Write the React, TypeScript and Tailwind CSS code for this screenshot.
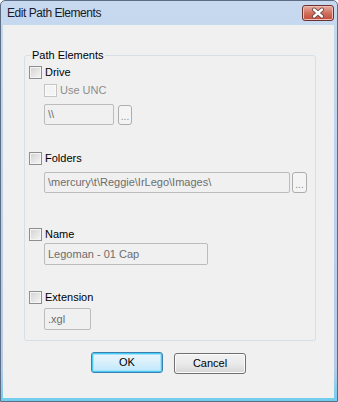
import React from "react";

const font = "font-['Liberation_Sans',Arial,sans-serif]";

const CheckBox: React.FC<{ label: string; disabled?: boolean }> = ({ label, disabled }) => (
  <div className="flex h-[13px] items-center gap-[3px]">
    <span
      className={
        disabled
          ? "box-border h-[13px] w-[13px] border border-[#c5c5c5] bg-[#f4f4f4] shadow-[inset_0_0_0_1px_#fbfbfb]"
          : "box-border h-[13px] w-[13px] border border-[#8e8f8f] bg-linear-to-br from-[#d2d2d2] to-[#f6f6f6] shadow-[inset_0_0_0_1px_#f4f4f4]"
      }
    />
    <span className={disabled ? "leading-[13px] text-[#8d8d8d]" : "leading-[13px] text-black"}>{label}</span>
  </div>
);

const TextBox: React.FC<{ text: string; w: string; h?: string; className?: string }> = ({
  text,
  w,
  h = "h-[21px]",
  className = "",
}) => (
  <div
    className={`box-border flex items-center rounded-[2px] border border-[#bcbcbc] bg-[#f0f0f0] pl-[3px] text-[#6d6d6d] ${w} ${h} ${className}`}
  >
    {text}
  </div>
);

const DotsButton: React.FC<{ w: string; h: string }> = ({ w, h }) => (
  <div
    className={`box-border flex items-end justify-center rounded-[3px] border border-[#adadad] bg-[#f4f4f4] pb-[3px] text-[10px] leading-[8px] text-[#8d8d8d] ${w} ${h}`}
  >
    ...
  </div>
);

export default function App() {
  return (
    <div
      className={`${font} box-border flex h-[402px] w-[338px] flex-col rounded-t-[5px] border border-[#5d6e84] bg-linear-to-b from-[#c6d9ef] via-[#b3cbe7] via-92% to-[#6fcdef] text-[11px]`}
    >
      {/* Title bar */}
      <div className="flex h-[24px] items-start justify-between pr-[3px] pl-[6px]">
        <span className="pt-[5px] text-[12px] leading-[15px] tracking-[-0.45px] text-[#1a1a2a]">
          Edit Path Elements
        </span>
        <div className="mt-[4px] box-border h-[16px] w-[32px] overflow-hidden rounded-[3px] border border-[#6b3030] bg-linear-to-b from-[#e9ada0] via-[#d0705f] to-[#c24a3a] shadow-[inset_0_0_0_1px_#eebdb3]">
          <svg width="30" height="14" viewBox="0 0 30 14">
            <path d="M11 3.5 L19 10.5 M19 3.5 L11 10.5" stroke="#5a3a3a" strokeWidth="4" strokeLinecap="round" />
            <path d="M11 3.5 L19 10.5 M19 3.5 L11 10.5" stroke="#ffffff" strokeWidth="2.4" strokeLinecap="round" />
          </svg>
        </div>
      </div>

      {/* Client area */}
      <div className="mr-[3px] mb-[3px] ml-[2px] flex flex-1 flex-col bg-[#f0f0f0]">
        <fieldset className="mt-[23px] mr-[18px] ml-[21px] rounded-[3px] border border-[#d5dfe5] pb-[10px] pl-[4px]">
          <legend className="ml-[2px] px-[1px] leading-[14px] text-black">Path Elements</legend>

          <div className="mt-[4px]">
            <CheckBox label="Drive" />
          </div>
          <div className="mt-[5px] ml-[15px]">
            <CheckBox label="Use UNC" disabled />
          </div>
          <div className="mt-[7px] ml-[15px] flex items-center gap-[4px]">
            <TextBox text={"\\\\"} w="w-[70px]" />
            <DotsButton w="w-[14px]" h="h-[20px]" />
          </div>

          <div className="mt-[27px]">
            <CheckBox label="Folders" />
          </div>
          <div className="mt-[7px] ml-[15px] flex items-center gap-[2px]">
            <TextBox text={"\\mercury\\t\\Reggie\\IrLego\\Images\\"} w="w-[246px]" />
            <DotsButton w="w-[15px]" h="h-[21px]" />
          </div>

          <div className="mt-[35px]">
            <CheckBox label="Name" />
          </div>
          <div className="mt-[2px] ml-[15px]">
            <TextBox text="Legoman - 01 Cap" w="w-[164px]" h="h-[22px]" />
          </div>

          <div className="mt-[26px]">
            <CheckBox label="Extension" />
          </div>
          <div className="mt-[4px] ml-[15px]">
            <TextBox text=".xgl" w="w-[47px]" h="h-[22px]" />
          </div>
        </fieldset>

        {/* Buttons */}
        <div className="mt-[11px] flex justify-center gap-[11px]">
          <div className="box-border flex h-[21px] w-[72px] items-center justify-center rounded-[3px] border border-[#3c7fb1] bg-linear-to-b from-[#eaf6fd] via-[#d9f0fc] via-50% to-[#bee6fd] text-black shadow-[inset_0_0_0_1px_#48cbf3,inset_0_0_0_2px_#a7e3f9]">
            OK
          </div>
          <div className="mt-[1px] box-border flex h-[21px] w-[72px] items-center justify-center rounded-[3px] border border-[#707070] bg-linear-to-b from-[#f2f2f2] via-[#ebebeb] via-50% to-[#d6d6d6] text-black shadow-[inset_0_0_0_1px_#fbfbfb]">
            Cancel
          </div>
        </div>
      </div>
    </div>
  );
}
